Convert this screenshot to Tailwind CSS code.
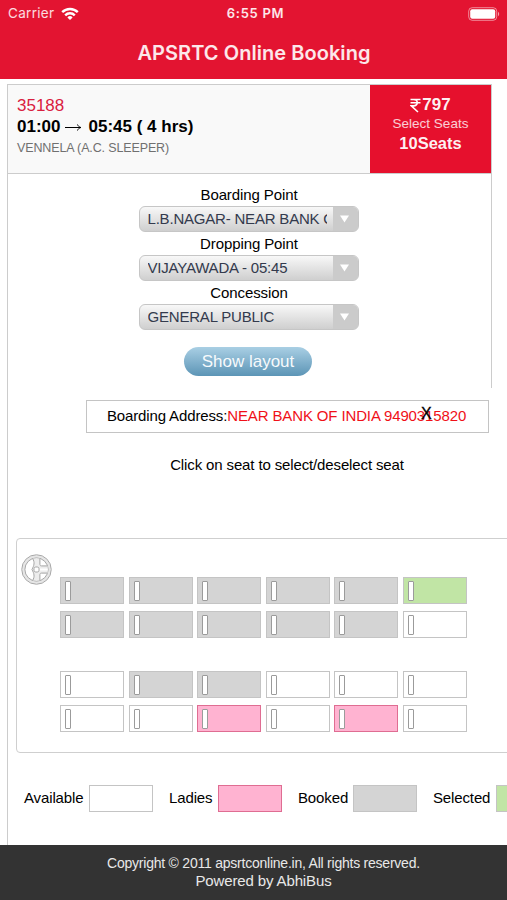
<!DOCTYPE html>
<html lang="en">

<head>
    <meta charset="UTF-8">
    <meta name="viewport" content="width=device-width, initial-scale=1.0">
    <title>APSRTC Online Booking</title>
    <script src="https://cdn.jsdelivr.net/npm/@tailwindcss/browser@4"></script>
</head>

<body class="bg-white font-['Liberation_Sans',Arial,sans-serif] text-black overflow-hidden">
    <div class="w-[507px] h-[900px] flex flex-col overflow-hidden">

        <!-- Header -->
        <header class="h-[79px] shrink-0 bg-[#e31431] text-white font-[Inter,sans-serif]">
            <div class="h-[27px] grid grid-cols-3 items-center pl-2 pr-[7px] text-[13.5px]">
                <div class="flex items-center gap-[7px] text-white/85 tracking-[0.3px]">
                    <span>Carrier</span>
                    <svg class="w-[18px] h-[14px]" viewBox="0 0 18 14" fill="none" stroke="#fff" stroke-width="2.4">
                        <path d="M1.2 5.2a11 11 0 0 1 15.6 0M4.2 8.3a6.8 6.8 0 0 1 9.6 0" />
                        <path d="M9 13 6.4 10.4a3.7 3.7 0 0 1 5.2 0z" fill="#fff" stroke="none" />
                    </svg>
                </div>
                <div class="text-center font-semibold text-white/90 text-[13px] tracking-[0.7px] pl-[3px] whitespace-nowrap">6:55 PM</div>
                <svg class="w-[32px] h-[14px] justify-self-end" viewBox="0 0 32 14">
                    <rect x="0.7" y="0.7" width="28" height="12.6" rx="3.5" fill="none" stroke="#fff" stroke-opacity=".5" />
                    <rect x="2.2" y="2.2" width="25" height="9.6" rx="2" fill="#fff" />
                    <path d="M30 4.8c1.6.8 1.6 3.6 0 4.4z" fill="#fff" fill-opacity=".6" />
                </svg>
            </div>
            <h1 class="h-[52px] flex items-center justify-center text-[20px] tracking-[0.05px] font-semibold text-white/90 pl-[1px] whitespace-nowrap">APSRTC Online Booking</h1>
        </header>

        <main class="ml-[7px] mt-[5px] flex-1 border-l border-[#ccc]">
            <!-- Service details -->
            <section class="w-[484px] h-[304px] border-t border-r border-[#ccc]">
                <div class="h-[89px] flex bg-[#f9f9f9] border-b border-[#ccc]">
                    <div class="flex-1 pl-[9px] pt-[10px] whitespace-nowrap">
                        <p class="text-[17px] leading-[21px] text-[#d9203f]">35188</p>
                        <p class="text-[17px] leading-[21px] font-bold flex items-center">01:00<svg class="ml-[5px] mr-[6px] w-[17px] h-[8px]" viewBox="0 0 17 8" fill="none" stroke="#000"><path d="M0 4.500h16M12.500 1.500c.6 1.600 1.700 2.600 3.400 3-1.700.4-2.800 1.400-3.400 3" /></svg>05:45 ( 4 hrs)</p>
                        <p class="text-[12.5px] leading-[23px] tracking-[-0.13px] text-[#707070]">VENNELA (A.C. SLEEPER)</p>
                    </div>
                    <div class="w-[121px] bg-[#e6102d] text-white/95 text-center pt-[10px]">
                        <p class="text-[17px] leading-[20px] font-bold flex items-center justify-center gap-[1px]">
                            <svg class="w-[11px] h-[15px]" viewBox="0 0 11 15" fill="none" stroke="#fff" stroke-width="1.6">
                                <path d="M.5 1.5h10M.5 4.8h10M.5 1.5h3c5 0 5 6.4 0 6.4H1.3L8 14" />
                            </svg>797
                        </p>
                        <p class="text-[13.5px] leading-[18px] text-white/80">Select Seats</p>
                        <p class="text-[16.5px] leading-[21px] font-bold">10Seats</p>
                    </div>
                </div>

                <div class="pt-[10px] pr-[2px] flex flex-col items-center text-[15px]" id="journey-form"></div>
            </section>

            <!-- Boarding address -->
            <section class="ml-[78px] mt-[12px] w-[403px] h-[33px] border border-[#c4c4c4] relative flex items-center justify-center pb-px pr-[2px] text-[15px] tracking-[-0.13px] whitespace-nowrap">
                <span>Boarding Address:</span><span class="text-[#f01018]">NEAR BANK OF INDIA 9490315820</span>
                <span class="absolute left-[334px] top-[2px] leading-[22px] text-[16px] [-webkit-text-stroke:0.3px_#000]">X</span>
            </section>

            <p class="mt-[22px] w-[558px] text-center text-[15px] leading-[20px] tracking-[-0.13px]">Click on seat to select/deselect seat</p>

            <!-- Seat layout -->
            <section class="ml-[8px] mt-[63px] w-[560px] h-[215px] border-[1.5px] border-[#cfcfcf] rounded-[4px] flex">
                <svg class="ml-[4px] mt-[15px] w-[31px] h-[31px] shrink-0" viewBox="0 0 32 32" fill="none" stroke="#a3a3a3">
                    <circle cx="16" cy="16" r="13.4" stroke="#e6e6e6" stroke-width="2.6" />
                    <circle cx="16" cy="16" r="15.2" />
                    <circle cx="16" cy="16" r="12" />
                    <!-- spokes -->
                    <path d="M12 4.700c2.500 4 1.500 7.300-.7 11.300 2.200 4 3.200 7.300.7 11.300h7.500v-7.300h8v-8h-8V4.700z" fill="#ededed" stroke="none" />
                    <path d="M12 4.700c2.500 4 1.500 7.300-.7 11.300 2.200 4 3.200 7.300.7 11.300M19.500 4.700v6c0 1 .6 1.600 1.600 1.600h6.200M19.500 27.300v-6c0-1 .6-1.600 1.600-1.600h6.200" />
                    <path d="M19 16h8.500" stroke="#fff" stroke-width="2" />
                    <rect x="13.400" y="13.400" width="5.200" height="5.200" rx="1.800" fill="#fff" />
                </svg>
                <div class="ml-[8px] mt-[38px]">
                    <div id="upper-rows" class="grid grid-cols-[repeat(6,64px)] gap-x-[4.5px] gap-y-[7px]"></div>
                    <div id="lower-rows" class="mt-[33px] grid grid-cols-[repeat(6,64px)] gap-x-[4.5px] gap-y-[7px]"></div>
                </div>
            </section>

            <!-- Legend -->
            <section class="mt-[32px] pl-[16px] w-[600px] flex items-center text-[15px] tracking-[-0.13px] whitespace-nowrap">
                <span class="w-[65px]">Available</span>
                <div class="w-[64px] h-[27px] border border-[#c4c4c4] bg-white"></div>
                <span class="ml-[16px] w-[49px]">Ladies</span>
                <div class="w-[64px] h-[27px] border border-[#df6d92] bg-[#ffb3d1]"></div>
                <span class="ml-[16px] w-[55px]">Booked</span>
                <div class="w-[64px] h-[27px] border border-[#c4c4c4] bg-[#d4d4d4]"></div>
                <span class="ml-[16px] w-[63px]">Selected</span>
                <div class="w-[64px] h-[27px] border border-[#c4c4c4] bg-[#c1e5a5]"></div>
            </section>
        </main>

        <!-- Footer -->
        <footer class="h-[55px] shrink-0 bg-[#333] text-[#e8e8e8] text-center pt-[9px] pl-[20px]">
            <p class="text-[14px] leading-[18px] tracking-[-0.23px]">Copyright © 2011 apsrtconline.in, All rights reserved.</p>
            <p class="text-[15px] leading-[18px] tracking-[-0.13px]">Powered by AbhiBus</p>
        </footer>
    </div>

    <script>
        const fields = [
            { label: "Boarding Point", value: "L.B.NAGAR- NEAR BANK OF INDIA" },
            { label: "Dropping Point", value: "VIJAYAWADA - 05:45" },
            { label: "Concession", value: "GENERAL PUBLIC" }
        ]

        const seatStyles = {
            available: "border-[#c4c4c4] bg-white",
            booked: "border-[#c4c4c4] bg-[#d4d4d4]",
            ladies: "border-[#df6d92] bg-[#ffb3d1]",
            selected: "border-[#c4c4c4] bg-[#c1e5a5]"
        }

        const upper = [
            "booked", "booked", "booked", "booked", "booked", "selected",
            "booked", "booked", "booked", "booked", "booked", "available"
        ]
        const lower = [
            "available", "booked", "booked", "available", "available", "available",
            "available", "available", "ladies", "available", "ladies", "available"
        ]

        const renderForm = () => {
            const form = document.getElementById("journey-form")
            form.innerHTML = fields.map((field) => `
                <label class="h-[22px] leading-[22px] pl-px tracking-[-0.1px]">${field.label}</label>
                <div class="w-[220px] h-[26px] mb-[1px] flex border border-[#c6c6c6] rounded-[6px] overflow-hidden bg-linear-to-b from-[#f8f8f8] to-[#cfcfcf]">
                    <div class="w-[188px] pl-[8px] leading-[24px] tracking-[-0.2px] text-[#333a4d] whitespace-nowrap"><div class="w-[179px] overflow-hidden">${field.value}</div></div>
                    <div class="flex-1 ml-[5px] bg-[#cbcbcb] flex items-center justify-center">
                        <svg class="w-[9px] h-[8px] mr-px" viewBox="0 0 10 8"><path d="M0 0h10L5 8z" fill="#fff" /></svg>
                    </div>
                </div>
            `).join("") + `
                <button class="mt-[16px] mr-[1px] w-[128px] h-[29px] rounded-full bg-linear-to-b from-[#a9cfe4] to-[#5c95b6] text-white/95 text-[17px] leading-[29px]">Show layout</button>
            `
        }

        const renderSeats = (id, seats) => {
            document.getElementById(id).innerHTML = seats.map((status) => `
                <div class="h-[27px] border ${seatStyles[status]} pl-[4px] pt-[3px]">
                    <div class="w-[6px] h-[20px] border border-[#9b9b9b] rounded-[1px] bg-white"></div>
                </div>
            `).join("")
        }

        renderForm()
        renderSeats("upper-rows", upper)
        renderSeats("lower-rows", lower)
    </script>
</body>

</html>
